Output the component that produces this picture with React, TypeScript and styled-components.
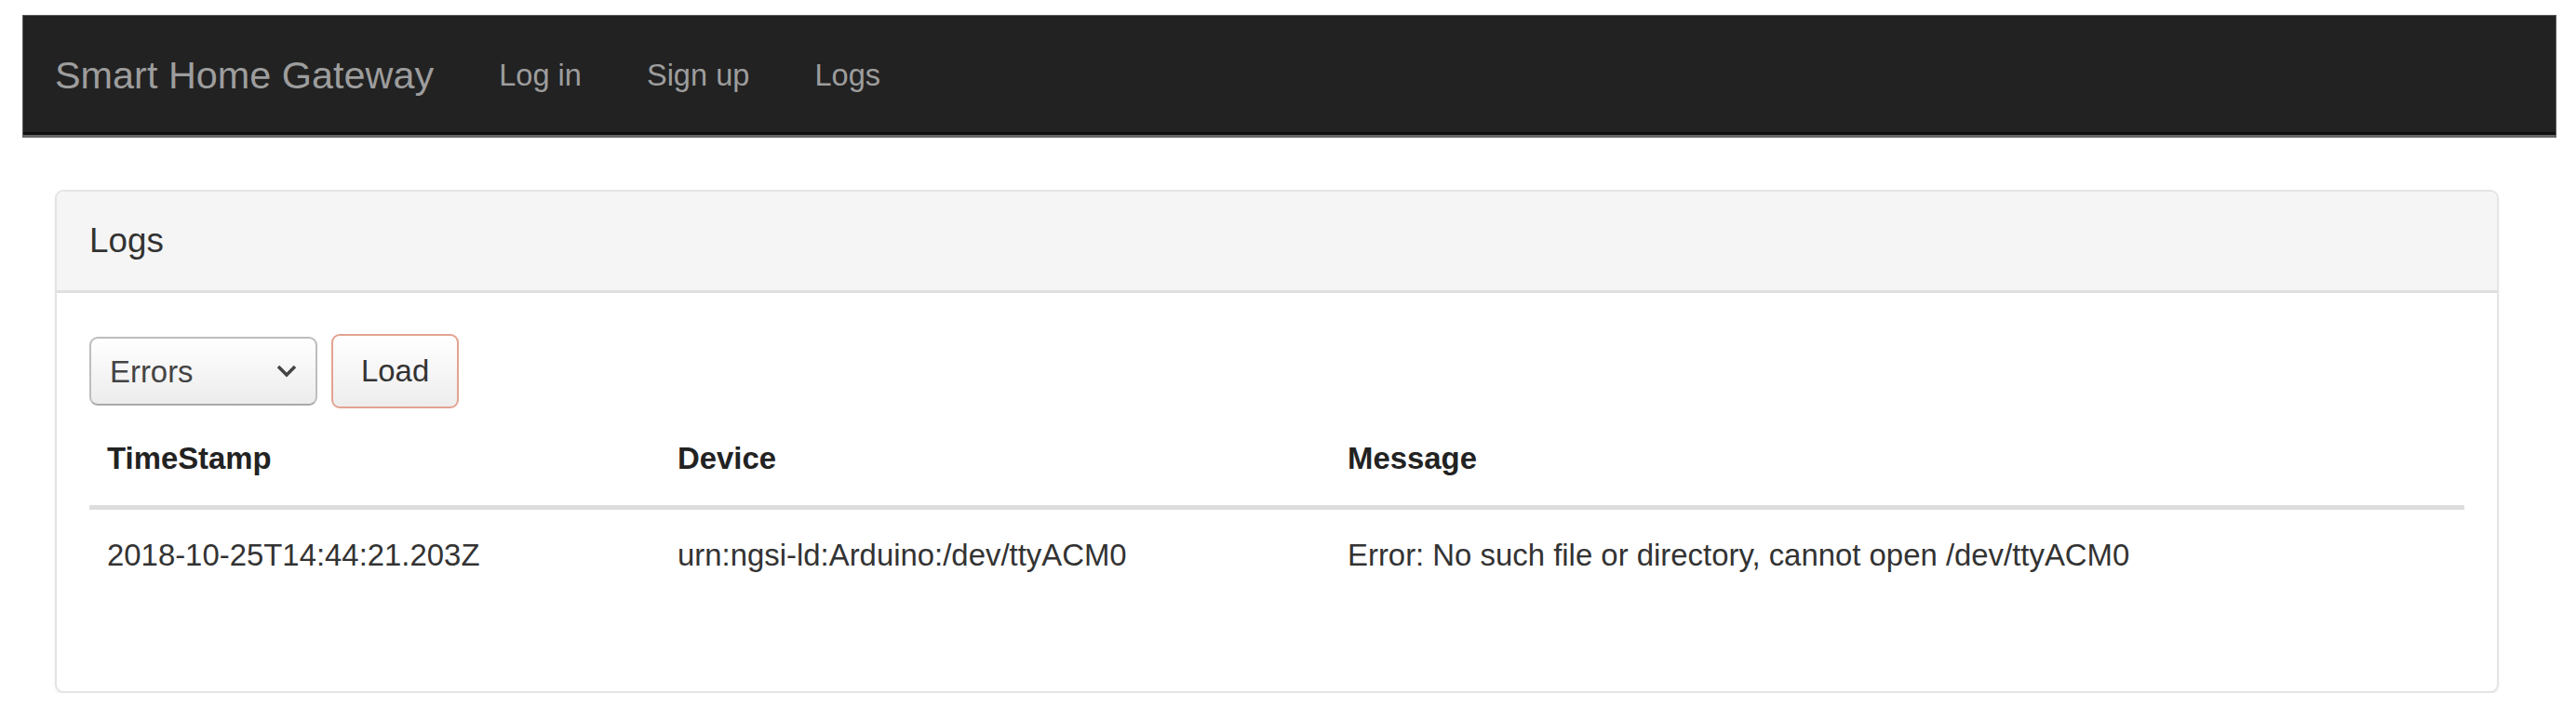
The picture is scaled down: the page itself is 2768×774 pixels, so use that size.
import React from "react";
import styled, { createGlobalStyle } from "styled-components";

const GlobalStyle = createGlobalStyle`
  html, body {
    margin: 0;
    padding: 0;
    background: #ffffff;
  }
  body {
    font-family: "Liberation Sans", Arial, Helvetica, sans-serif;
    color: #333333;
  }
  * {
    box-sizing: border-box;
  }
`;

type LogRow = {
  timestamp: string;
  device: string;
  message: string;
};

const rows: LogRow[] = [
  {
    timestamp: "2018-10-25T14:44:21.203Z",
    device: "urn:ngsi-ld:Arduino:/dev/ttyACM0",
    message: "Error: No such file or directory, cannot open /dev/ttyACM0",
  },
];

const navLinks = ["Log in", "Sign up", "Logs"];

export default function App() {
  return (
    <>
      <GlobalStyle />
      <Page>
        <Navbar>
          <Brand href="#">Smart Home Gateway</Brand>
          <NavList>
            {navLinks.map((label) => (
              <NavLink key={label} href="#">
                {label}
              </NavLink>
            ))}
          </NavList>
        </Navbar>

        <Content>
          <Panel>
            <PanelHeading>Logs</PanelHeading>
            <PanelBody>
              <Toolbar>
                <SelectWrap>
                  <Select defaultValue="errors">
                    <option value="errors">Errors</option>
                    <option value="all">All</option>
                  </Select>
                  <Chevron viewBox="0 0 24 16" aria-hidden>
                    <path d="M3 3 L12 12 L21 3" />
                  </Chevron>
                </SelectWrap>
                <LoadButton type="button">Load</LoadButton>
              </Toolbar>

              <Table>
                <thead>
                  <tr>
                    <Th $width={613}>TimeStamp</Th>
                    <Th $width={720}>Device</Th>
                    <Th>Message</Th>
                  </tr>
                </thead>
                <tbody>
                  {rows.map((row) => (
                    <tr key={row.timestamp}>
                      <Td>{row.timestamp}</Td>
                      <Td>{row.device}</Td>
                      <Td>{row.message}</Td>
                    </tr>
                  ))}
                </tbody>
              </Table>
            </PanelBody>
          </Panel>
        </Content>
      </Page>
    </>
  );
}

const Page = styled.div`
  padding: 16px 21px 0 24px;
`;

const Navbar = styled.nav`
  display: flex;
  align-items: center;
  height: 132px;
  padding-left: 34px;
  background: #222222;
  border: 1px solid #5a5a5a;
  border-bottom: 3px solid #666666;
  box-shadow: inset 0 -3px 0 #101010;
`;

const Brand = styled.a`
  font-size: 41.4px;
  color: #9d9d9d;
  text-decoration: none;
  margin-right: 70px;
  white-space: nowrap;
`;

const NavList = styled.div`
  display: flex;
  gap: 70px;
`;

const NavLink = styled.a`
  font-size: 32.6px;
  color: #9d9d9d;
  text-decoration: none;
  white-space: nowrap;
`;

const Content = styled.main`
  margin: 56px 62px 0 35px;
`;

const Panel = styled.section`
  background: #ffffff;
  border: 2px solid #e4e4e4;
  border-radius: 9px;
  box-shadow: 0 2px 3px rgba(0, 0, 0, 0.06);
`;

const PanelHeading = styled.header`
  display: flex;
  align-items: center;
  height: 109px;
  padding: 0 35px;
  font-size: 36.8px;
  color: #333333;
  background: #f5f5f5;
  border-bottom: 3px solid #e0e0e0;
  border-radius: 7px 7px 0 0;
`;

const PanelBody = styled.div`
  padding: 44px 35px 97px 35px;
`;

const Toolbar = styled.div`
  display: flex;
  align-items: center;
  gap: 15px;
  height: 80px;
`;

const SelectWrap = styled.div`
  position: relative;
  width: 245px;
  height: 74px;
`;

const Select = styled.select`
  appearance: none;
  width: 100%;
  height: 100%;
  padding: 0 60px 0 20px;
  font-family: inherit;
  font-size: 32.9px;
  color: #444444;
  background: linear-gradient(#ffffff, #ececec);
  border: 2px solid #bdbdbd;
  border-bottom-color: #a9a9a9;
  border-radius: 9px;
  outline: none;
`;

const Chevron = styled.svg`
  position: absolute;
  top: 29px;
  right: 21px;
  width: 24px;
  height: 16px;
  pointer-events: none;
  fill: none;
  stroke: #444444;
  stroke-width: 3.5;
`;

const LoadButton = styled.button`
  height: 80px;
  padding: 0 30px;
  font-family: inherit;
  font-size: 32.9px;
  color: #333333;
  background: linear-gradient(#ffffff, #ededed);
  border: 2px solid #e3a391;
  border-radius: 9px;
  cursor: pointer;
`;

const Table = styled.table`
  width: 100%;
  border-collapse: collapse;
  font-size: 32.9px;
  line-height: 46px;
`;

const Th = styled.th<{ $width?: number }>`
  width: ${(p) => (p.$width ? `${p.$width}px` : "auto")};
  padding: 31px 18px 27px 19px;
  text-align: left;
  font-weight: bold;
  color: #222222;
  border-bottom: 5px solid #dddddd;
`;

const Td = styled.td`
  padding: 26px 18px 26px 19px;
  color: #333333;
  white-space: nowrap;
`;
